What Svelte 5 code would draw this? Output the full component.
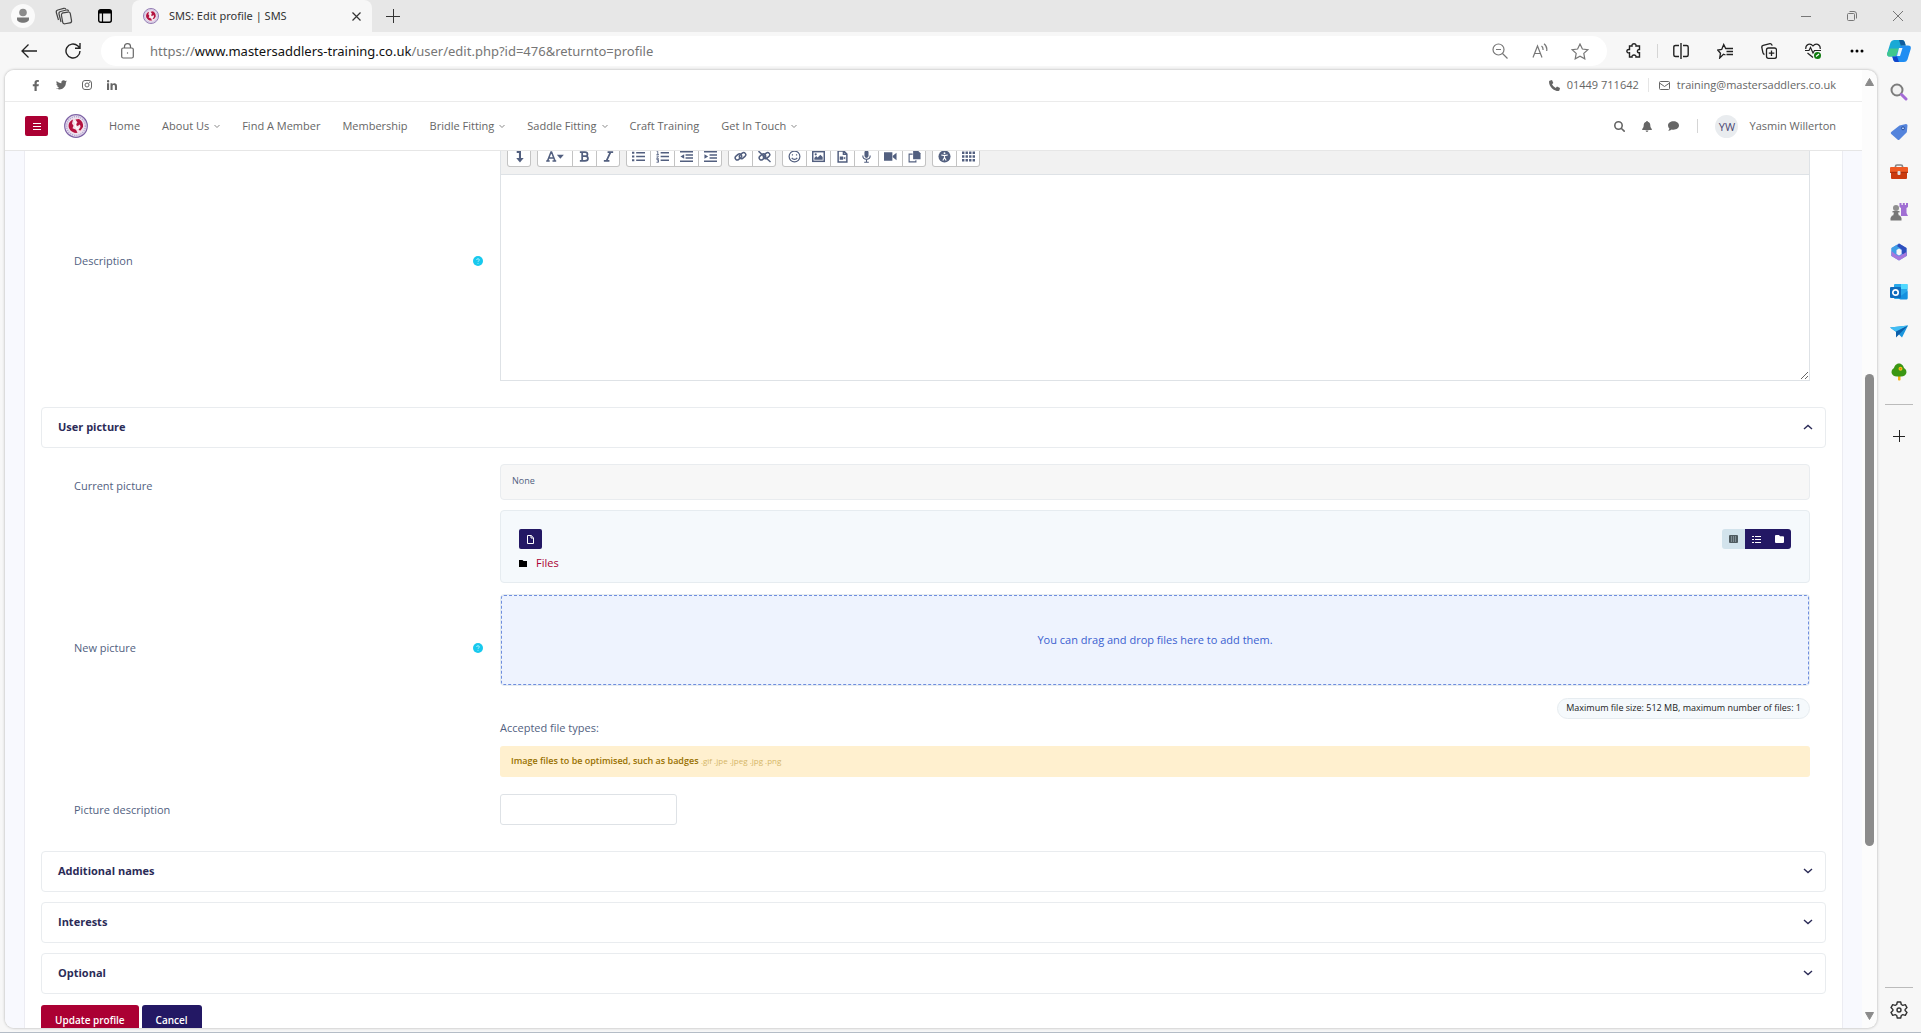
<script lang="ts">
    type Item = { label: string; menu?: boolean };

    const navItems: Item[] = [
        { label: "Home" },
        { label: "About Us", menu: true },
        { label: "Find A Member" },
        { label: "Membership" },
        { label: "Bridle Fitting", menu: true },
        { label: "Saddle Fitting", menu: true },
        { label: "Craft Training" },
        { label: "Get In Touch", menu: true },
    ];

    const editorGroups = [
        ["toggle"],
        ["style", "bold", "italic"],
        ["ul", "ol", "outdent", "indent"],
        ["link", "unlink"],
        ["smile", "image", "media", "mic", "video", "copy"],
        ["access", "grid"],
    ];

    const closedSections = ["Additional names", "Interests", "Optional"];
    const apps = ["search", "tag", "toolbox", "games", "m365", "outlook", "drop", "tree"];

    let description = $state("");
    let pictureDescription = $state("");
</script>

{#snippet crest(size: number)}
    <svg width={size} height={size} viewBox="0 0 24 24">
        <circle cx="12" cy="12" r="11.300" fill="#e9e1f0" stroke="#7d62a5" stroke-width="1.200" />
        <circle cx="12" cy="12" r="9.400" fill="none" stroke="#b9a8cf" stroke-width="1.500" stroke-dasharray="1.200 1" />
        <circle cx="12" cy="12" r="7.800" fill="#f3dfe8" />
        <path d="M9 5.500c-4 1.500-5.500 6-3.500 9.500 1.500 2.800 5 4.300 8 3.800l-1.500-3-3.500-1.500 1-2.500L8 9.500z" fill="#b3123f" />
        <path d="M11.500 5.500 15 5c3 1.500 4.500 4.500 4 8l-2.500 3.500-2-.5 2-3-.5-2.500-2.500 1.500-2-1.500 2-2z" fill="#b3123f" />
        <path d="m10.500 7 1.500 3-1 2 2 2.500 2-.5" fill="none" stroke="#fff" stroke-width="1.100" />
    </svg>
{/snippet}

{#snippet chevron(up: boolean)}
    <svg class="chevron" class:up width="10" height="10" viewBox="0 0 10 10" fill="none" stroke="currentColor" stroke-width="1.400"><path d="M1 3 5 6.500 9 3" /></svg>
{/snippet}

{#snippet help()}
    <svg width="10" height="10" viewBox="0 0 10 10">
        <circle cx="5" cy="5" r="5" fill="#17c9ee" />
        <path d="M3.600 4c0-1.700 2.800-1.700 2.800 0 0 .9-1.400.8-1.400 1.800M5 6.900v.9" fill="none" stroke="#b5effb" stroke-width=".9" />
    </svg>
{/snippet}

{#snippet editorIcon(name: string)}
    <svg width={name === "style" ? 20 : 13} height="13" viewBox={name === "style" ? "0 0 20 14" : "0 0 14 14"} fill="none" stroke="currentColor" stroke-width="1.600">
        {#if name === "toggle"}
            <path d="M4 2h3.500v8" stroke-width="2.200" /><path d="M3.500 8.500h8L7.500 13.500z" fill="currentColor" stroke="none" />
        {:else if name === "style"}
            <path d="M2 11.700 5.700 2.200h.6l3.700 9.500M3.500 8.500h5M.5 11.800h3.800M7.300 11.800h4" /><path d="M12 5h7.500l-3.700 4.500z" fill="currentColor" stroke="none" />
        {:else if name === "bold"}
            <path d="M2 2.200h5.500c3.600 0 3.600 4.500 0 4.500H5M7.500 6.700c4.300 0 4.300 5.100 0 5.100H2M4.500 2.200v9.600" stroke-width="1.900" />
        {:else if name === "italic"}
            <path d="M6 2.200h6M2 11.800h6M9.200 2.200 4.800 11.800" stroke-width="1.900" />
        {:else if name === "ul"}
            <path d="M4.500 3H14M4.500 7H14M4.500 11H14" /><path d="M0 3h2.500M0 7h2.500M0 11h2.500" stroke-width="2.300" />
        {:else if name === "ol"}
            <path d="M5 3h9M5 7h9M5 11h9" /><path d="M.7 1.500h1.200v3.200M.5 4.800h2.700M.5 6.500h2.200L.6 9h2.500M.5 10.200h2.200v3H.5M1 11.700h1.700" stroke-width=".9" />
        {:else if name === "outdent"}
            <path d="M0 2h14M6 5.300h8M6 8.700h8M0 12h14" /><path d="M4.500 4.500v5L.5 7z" fill="currentColor" stroke="none" />
        {:else if name === "indent"}
            <path d="M0 2h14M6 5.300h8M6 8.700h8M0 12h14" /><path d="M.5 4.500v5l4-2.500z" fill="currentColor" stroke="none" />
        {:else if name === "link" || name === "unlink"}
            <rect x="1" y="5.200" width="7.500" height="4.600" rx="2.300" transform="rotate(-40 4.700 7.500)" /><rect x="5.500" y="3.800" width="7.500" height="4.600" rx="2.300" transform="rotate(-40 9.200 6.100)" />
            {#if name === "unlink"}<path d="M.5 1.200 13.500 13" />{/if}
        {:else if name === "smile"}
            <circle cx="7" cy="7" r="5.800" stroke-width="1.300" /><path d="M4 8.500c1.500 2.200 4.500 2.200 6 0M4.800 4.500v1.500M9.200 4.500v1.500" stroke-width="1.300" />
        {:else if name === "image"}
            <rect x=".8" y="1.800" width="12.400" height="10.400" /><path d="M2.500 10.500V8.500l2-2 1.500 1.500 3-3 2.500 2.500v3z" fill="currentColor" stroke="none" /><circle cx="4" cy="4.700" r="1.200" fill="currentColor" stroke="none" />
        {:else if name === "media"}
            <path d="M2.300 1h6l3.400 3.400V13H2.300zM8 1v3.700h3.700" /><path d="M4 7h3.700v3.500H4zM7.700 8.700l2.300-1.500v3z" fill="currentColor" stroke="none" />
        {:else if name === "mic"}
            <rect x="4.800" y=".5" width="4.400" height="8" rx="2.200" fill="currentColor" stroke="none" /><path d="M3 6c0 5.500 8 5.500 8 0M7 10v3M4.500 13.200h5" stroke-width="1.200" />
        {:else if name === "video"}
            <path d="M0 2.500h9v9H0zM9.500 6.300 13.500 3v8L9.500 7.700z" fill="currentColor" stroke="none" />
        {:else if name === "copy"}
            <path d="M5.500.5h5l3 3V10h-8z" fill="currentColor" stroke="none" /><path d="M5 4.500H1.200v8.300h7.300V11" stroke-width="1.200" />
        {:else if name === "access"}
            <circle cx="7" cy="7" r="6.500" fill="currentColor" stroke="none" /><path d="M3.500 5.300 7 6l3.500-.7M7 6v2.500M7 8l-1.800 3.200M7 8l1.800 3.200" stroke="#fff" stroke-width="1.200" /><circle cx="7" cy="3.500" r="1" fill="#fff" stroke="none" />
        {:else}
            <path d="M0 3h14M0 7h14M0 11h14" stroke-width="2.800" stroke-dasharray="2.600 1.200" />
        {/if}
    </svg>
{/snippet}

{#snippet appIcon(name: string)}
    <svg width="18" height="18" viewBox="0 0 18 18">
        {#if name === "search"}
            <circle cx="7" cy="7" r="5.500" fill="#f2f2f2" stroke="#7c7c7c" stroke-width="2" /><path d="m11.500 11.500 4.500 4.500" stroke="#a46bd6" stroke-width="3" stroke-linecap="round" />
        {:else if name === "tag"}
            <path d="M9.500 2.500 16 1q1.500 0 1.500 1.500l-.7 6.700-7.300 7.300q-1 1-2 0L1.200 11q-1-1 0-2z" fill="#5484dc" /><circle cx="13" cy="5.300" r="1.500" fill="#a9c7ff" stroke="#28509c" />
        {:else if name === "toolbox"}
            <path d="M5.500 5V3.500q0-1.500 1.500-1.500h4q1.500 0 1.500 1.500V5" fill="none" stroke="#858585" stroke-width="1.700" /><rect y="4" width="18" height="6" rx="1" fill="#ef5a24" /><rect x="1" y="9" width="16" height="7" rx="1" fill="#cb3b0f" /><path d="M0 9.300h18" stroke="#a52e0c" /><rect x="7.500" y="8" width="3" height="4" rx="1" fill="#dfe3e5" />
        {:else if name === "games"}
            <path d="M9.500 0h2v2h1.300V0h2v2H16V0h2v4l-1.500 1v5l1.500 3h-7V5L9.500 4z" fill="#a06fd3" /><circle cx="6" cy="5" r="3" fill="#8f8f8f" /><path d="M2.500 8h7v1.500H8L9 13H3l1-3.500H2.500zM2 12.500h8L11.500 15v2.500H.5V15z" fill="#777" />
        {:else if name === "m365"}
            <path d="M9 .5 16.500 5v8L9 17.500 1.500 13V5z" fill="#5b8de8" />
            <path d="M1.500 5 7 1.700 12 4.500 6.300 8v5L1.500 13z" fill="#3f9fe6" />
            <path d="m9 .5 7.500 4.500v8l-4.700-2.500V6.500L7 3z" fill="#2e4fbd" />
            <path d="M1.500 13V8l4.800 4L9 13.500l7.500-4.500v4L9 17.500z" fill="#a777dc" />
            <path d="m6.500 7 2.500-1.500L11.500 7v4L9 12.500 6.500 11z" fill="#f7f7f7" />
        {:else if name === "outlook"}
            <rect x="4" y="1" width="13.500" height="15" rx="1" fill="#28a8ea" /><path d="M11 1h6.500v5H11z" fill="#50d9ff" /><path d="m17.500 8-9 6.500q.5 2 2 2h6q1 0 1-1z" fill="#1490df" /><rect y="4" width="11" height="11" rx="1" fill="#0f6cbd" /><circle cx="5.500" cy="9.500" r="2.700" fill="none" stroke="#fff" stroke-width="1.700" />
        {:else if name === "drop"}
            <path d="M0 4.500 18 2.500 12 14.500 7 9.500z" fill="#1b96dd" /><path d="M18 2.500 7 9.500 0 4.500z" fill="#42bdf3" /><path d="M18 2.500 6 8.500v6l3-3z" fill="#0c5ea8" />
        {:else}
            <path d="M8 12h2.500v5q-1.200 1-2.500 0z" fill="#f4b41a" /><path d="M9 .5c3 0 4.500 2.500 5 4.500 2.500 1.500 3 4 2 6-1.500 2.500-4 2.500-7 2.500s-5.500 0-7-2.500c-1-2-.5-4.500 2-6 .5-2 2-4.500 5-4.500z" fill="#3b9714" /><circle cx="10.500" cy="5.700" r="2" fill="#f5c21b" /><circle cx="10.500" cy="5.700" r=".8" fill="#e2661a" />
        {/if}
    </svg>
{/snippet}

<div class="browser">
    <header class="tabstrip">
        <div class="tab-tools">
            <button aria-label="Profile">
                <svg width="24" height="24" viewBox="0 0 24 24"><circle cx="12" cy="12" r="12" fill="#fafafa" /><circle cx="12" cy="8.500" r="3.800" fill="#8b8b8b" /><path d="M6 13.500h12v1.500c0 5-12 5-12 0z" fill="#777" /></svg>
            </button>
            <button aria-label="Workspaces">
                <svg width="18" height="18" viewBox="0 0 18 18" fill="none" stroke="#444" stroke-width="1.200"><rect x="7" y="5.500" width="9" height="11" rx="2" transform="rotate(-10 11 11)" /><path d="M6 15 4 7q-.4-2 1.500-2.500L11.500 3q1.800-.3 2.200 1.300M3.500 13 1.300 5.500q-.4-2 1.500-2.500l6-1.700q1.500-.2 2 1" /></svg>
            </button>
            <button aria-label="Tab actions">
                <svg width="14" height="14" viewBox="0 0 14 14"><rect x=".7" y=".7" width="12.600" height="12.600" rx="2" fill="none" stroke="#000" stroke-width="1.400" /><path d="M1 1h12v3.500H1z" /><path d="M4.500 4v9" stroke="#000" stroke-width="1.200" /></svg>
            </button>
        </div>
        <div class="tab">
            {@render crest(16)}
            <span>SMS: Edit profile | SMS</span>
            <button aria-label="Close tab"><svg width="9" height="9" viewBox="0 0 9 9" stroke="#333" stroke-width="1.200"><path d="m.5.5 8 8M8.500.5l-8 8" /></svg></button>
        </div>
        <button class="new-tab" aria-label="New tab"><svg width="14" height="14" viewBox="0 0 14 14" stroke="#333"><path d="M7.500 0v14M0 7.500h14" /></svg></button>
        <div class="window-buttons">
            <button aria-label="Minimize"><svg width="10" height="10" viewBox="0 0 10 10" stroke="#777"><path d="M0 5.500h10" /></svg></button>
            <button aria-label="Restore"><svg width="10" height="10" viewBox="0 0 10 10" fill="none" stroke="#777"><rect x=".5" y="2.500" width="7" height="7" rx="1" /><path d="M2.500.5H7q2.500 0 2.500 2.500v4.500" /></svg></button>
            <button aria-label="Close"><svg width="10" height="10" viewBox="0 0 10 10" stroke="#777"><path d="m0 0 10 10M10 0 0 10" /></svg></button>
        </div>
    </header>

    <div class="toolbar">
        <button aria-label="Back"><svg width="16" height="14" viewBox="0 0 16 14" fill="none" stroke="#222" stroke-width="1.300"><path d="M16 7H1M7.500.5 1 7l6.500 6.500" /></svg></button>
        <button aria-label="Reload"><svg width="16" height="16" viewBox="0 0 16 16" fill="none" stroke="#222" stroke-width="1.400"><path d="M15 8A7 7 0 1 1 12.700 2.800L15 5M15 0v5.200H10" /></svg></button>
        <div class="address">
            <svg width="13" height="16" viewBox="0 0 13 16" fill="none" stroke="#666" stroke-width="1.200"><rect x=".7" y="5" width="11.600" height="10" rx="1.500" /><path d="M3.500 5V3.500q0-2.800 3-2.800t3 2.800V5" /><circle cx="6.500" cy="10" r=".7" fill="#666" stroke="none" /></svg>
            <div class="url">https://<b>www.mastersaddlers-training.co.uk</b>/user/edit.php?id=476&amp;returnto=profile</div>
            <button aria-label="Zoom out"><svg width="16" height="16" viewBox="0 0 16 16" fill="none" stroke="#777" stroke-width="1.200"><circle cx="6.500" cy="6.500" r="5.500" /><path d="m10.500 10.500 5 5M4 6.500h5" /></svg></button>
            <button aria-label="Read aloud"><svg width="16" height="16" viewBox="0 0 16 16" fill="none" stroke="#777" stroke-width="1.200"><path d="M1 14.500 5.500 3 10 14.500M2.500 10.500h6M9.500 3c1.300 1 1.700 2.300 1.500 4M12 .7c2.500 1.800 3.200 4.300 2.700 7.300" /></svg></button>
            <button aria-label="Favourite"><svg width="18" height="17" viewBox="0 0 18 17" fill="none" stroke="#777" stroke-width="1.200"><path d="m9 1 2.400 5 5.400.7-4 3.700 1 5.400L9 13.200l-4.800 2.600 1-5.400-4-3.700L6.600 6z" /></svg></button>
        </div>
        <div class="extensions">
            <button aria-label="Extensions"><svg width="16" height="16" viewBox="0 0 16 16" fill="none" stroke="#222" stroke-width="1.400"><path d="M3.500 3H6c-.6-3 4.600-3 4 0h3.500v3.500c-2.800-.3-2.800 3.600 0 3.300V14H10c.5-2.700-4.500-2.700-4 0H3.500V9.800C0 10.500 0 5.800 3.500 6.500z" /></svg></button>
            <i class="divider"></i>
            <button aria-label="Split screen"><svg width="16" height="16" viewBox="0 0 16 16" fill="none" stroke="#222" stroke-width="1.400"><path d="M6 2.500H2.500Q.8 2.500.8 4v8q0 1.500 1.700 1.500H6M10 2.500h3.500q1.700 0 1.700 1.500v8q0 1.500-1.700 1.500H10M8 0v16" /></svg></button>
            <button aria-label="Favourites"><svg width="16" height="16" viewBox="0 0 16 16" fill="none" stroke="#222" stroke-width="1.300"><path d="m8.500 12-2-.8L2.700 15l.8-4.800L.7 7l4-.6L6.700 1.500l2 4H16M9.500 8.500H16M9.500 11.500H16" /></svg></button>
            <button aria-label="Collections"><svg width="16" height="16" viewBox="0 0 16 16" fill="none" stroke="#222" stroke-width="1.300"><rect x="5.500" y="5" width="10" height="10.300" rx="2" /><path d="M10.500 7.500v5.500M7.800 10.200h5.500M3.500 11.500q-1.300-.3-1.600-1.800L.8 4.500Q.5 2.800 2.200 2.300L9 .7q1.700-.2 2.200 2" /></svg></button>
            <button aria-label="Browser essentials"><svg width="16" height="16" viewBox="0 0 16 16" fill="none" stroke="#222" stroke-width="1.200"><path d="M.8 6C.3 1 5.500-.5 8 3c2.500-3.500 7.700-2 7.200 3M0 7.500h4l1.500-3L8 10l1.500-2.500H16M2.500 10 8 14.500" /><circle cx="12.500" cy="12.500" r="3.500" fill="#107c10" stroke="none" /><path d="m11 13.500 3-2.500" stroke="#fff" /></svg></button>
            <button aria-label="Settings and more"><svg width="14" height="4" viewBox="0 0 14 4"><circle cx="2" cy="2" r="1.500" /><circle cx="7" cy="2" r="1.500" /><circle cx="12" cy="2" r="1.500" /></svg></button>
        </div>
        <button class="copilot" aria-label="Copilot">
            <svg width="24" height="22" viewBox="0 0 24 22"><path d="M7 0h8q2 0 2.700 2l1 3.500h-3q-2 0-2.700 2L10 14q-.8 2.500-3 2.500H3q-3.500 0-2.700-3.500L3.500 2.500Q4.500 0 7 0z" fill="#19a9d5" /><path d="M3 8.500h9L10 14q-.8 2.500-3 2.500H3q-3.500 0-2.700-3.500z" fill="#40c78d" /><path d="M17 22H9q-2 0-2.700-2l-1-3.500h2q2 0 2.700-2.500l2.500-6.500q.7-2 2.700-2H21q3.500 0 2.700 3.500L20.500 19.500Q19.500 22 17 22z" fill="#1f8df2" /><path d="M12 0h3q2 0 2.700 2l1 3.500h-5z" fill="#105b9c" /><path d="M5.300 16.500H10L12 22H9q-2 0-2.700-2z" fill="#1244c9" /><path d="m12 8-2 8h3l2.500-8z" fill="#e9f6fb" /></svg>
        </button>
    </div>

    <div class="body">
        <div class="page">
            <div class="site">
                <div class="topbar">
                    <div class="social">
                        <a href="#facebook" aria-label="Facebook"><svg width="10" height="11" viewBox="0 0 10 11"><path d="M3.500 11V6.200H1.800V4.300h1.700V2.800C3.500 1 4.500 0 6.200 0L8 .2v1.600H7q-1.300 0-1.300 1.100v1.400h2.200l-.4 1.900H5.700V11z" fill="#666" /></svg></a>
                        <a href="#twitter" aria-label="Twitter"><svg width="11" height="10" viewBox="0 0 11 10"><path d="m11 1.300-1.100 1.300C10 7 6.500 9.500 3.500 9.500 2 9.500 1 9.200 0 8.600c1.200.1 2.300-.2 3.200-.9-1-.1-1.700-.7-2-1.600h1C1 5.700.4 4.900.4 3.800l1 .3C.3 3.200.2 2 .8.900 2 2.200 3.600 3 5.400 3.200 5 1.500 6.200.3 7.600.3c.7 0 1.200.2 1.700.7L10.700.5 9.800 1.700z" fill="#666" /></svg></a>
                        <a href="#instagram" aria-label="Instagram"><svg width="10" height="10" viewBox="0 0 10 10" fill="none" stroke="#666"><rect x=".5" y=".5" width="9" height="9" rx="2.500" /><circle cx="5" cy="5" r="2" /><circle cx="7.600" cy="2.400" r=".3" /></svg></a>
                        <a href="#linkedin" aria-label="LinkedIn"><svg width="10" height="10" viewBox="0 0 10 10" fill="#666"><path d="M0 3.300h2.100V10H0zM3.500 3.300h2v1c1-1.700 4.500-1.700 4.500 1.700v4H7.900V6.500c0-2-2.300-1.900-2.300 0V10H3.500z" /><circle cx="1.100" cy="1.200" r="1.200" /></svg></a>
                    </div>
                    <div class="contact">
                        <a href="#phone"><svg width="11" height="11" viewBox="0 0 11 11"><path d="M.5.7 3 0l1.300 3L3 4.200q1 2.500 3.700 3.700L8 6.600l3 1.300-.6 2.500-.8.600C4.500 11 0 6.500 0 1.400z" fill="#666" /></svg>01449 711642</a>
                        <a href="#mail"><svg width="11" height="9" viewBox="0 0 11 9" fill="none" stroke="#666"><rect x=".5" y=".5" width="10" height="8" rx="1" /><path d="m.5 2 5 3.500 5-3.500" /></svg>training@mastersaddlers.co.uk</a>
                    </div>
                </div>

                <nav class="navbar">
                    <button class="burger" aria-label="Menu"><svg width="8" height="8" viewBox="0 0 8 8" stroke="#fff"><path d="M0 1.500h8M0 4.500h8M0 7.500h8" /></svg></button>
                    <a class="logo" href="#home" aria-label="SMS">{@render crest(24)}</a>
                    <div class="links">
                        {#each navItems as item}
                            <a href="#nav">{item.label}{#if item.menu}<svg width="6" height="5" viewBox="0 0 6 5" fill="none" stroke="#888"><path d="m.5 1 2.500 2.500L5.500 1" /></svg>{/if}</a>
                        {/each}
                    </div>
                    <div class="user-tools">
                        <button aria-label="Search"><svg width="11" height="11" viewBox="0 0 11 11" fill="none" stroke="#666" stroke-width="1.600"><circle cx="4.500" cy="4.500" r="3.700" /><path d="m7.200 7.200 3.500 3.500" /></svg></button>
                        <button aria-label="Notifications"><svg width="10" height="11" viewBox="0 0 10 11" fill="#666"><path d="M4.300 0h1.400v.8C7.500 1.200 8.300 2.500 8.300 4.300c0 2 .7 2.900 1.500 3.700v1H.2V8c.8-.8 1.500-1.700 1.500-3.700 0-1.800.8-3.100 2.600-3.500zM3.600 9.600h2.800c0 1.800-2.800 1.800-2.800 0z" /></svg></button>
                        <button aria-label="Messages"><svg width="11" height="10" viewBox="0 0 11 10"><path d="M5.500.3C8.600.3 11 2.200 11 4.500S8.600 8.700 5.500 8.700q-1 0-1.800-.2Q2 9.800.2 9.800q1.100-1.200 1.200-2.300Q0 6.300 0 4.500C0 2.200 2.400.3 5.500.3z" fill="#666" /></svg></button>
                        <i class="divider"></i>
                        <span class="initials">YW</span>
                        <a href="#user">Yasmin Willerton</a>
                    </div>
                </nav>

                <main>
                    <form class="card" onsubmit={(e) => e.preventDefault()}>
                        <div class="row editor-row">
                            <div class="label"><label for="description">Description</label>{@render help()}</div>
                            <div class="editor">
                                <div class="editor-toolbar">
                                    {#each editorGroups as group}
                                        <div class="group">
                                            {#each group as name}
                                                <button type="button" class:wide={name === "style"} aria-label={name}>{@render editorIcon(name)}</button>
                                            {/each}
                                        </div>
                                    {/each}
                                </div>
                                <textarea id="description" bind:value={description}></textarea>
                            </div>
                        </div>

                        <button type="button" class="section">User picture {@render chevron(true)}</button>

                        <div class="section-body">
                            <div class="row low-label">
                                <div class="label"><span>Current picture</span></div>
                                <div class="static">None</div>
                            </div>

                            <div class="row low-label">
                                <div class="label"><span>New picture</span>{@render help()}</div>
                                <div class="upload">
                                    <div class="filemanager">
                                        <div class="fm-bar">
                                            <button type="button" class="add" aria-label="Add"><svg width="7" height="9" viewBox="0 0 7 9" fill="none" stroke="#fff"><path d="M.5.5h3.700l2.300 2.300v5.700h-6zM4 .5V3h2.500" /></svg></button>
                                            <div class="views">
                                                <button type="button" class="current" aria-label="Icons"><svg width="9" height="8" viewBox="0 0 9 8"><rect width="9" height="8" rx="1" fill="#4f5b60" /><path d="M2.500 1v6M4.500 1v6M6.500 1v6" stroke="#7f8d94" /></svg></button>
                                                <button type="button" aria-label="List"><svg width="9" height="7" viewBox="0 0 9 7" stroke="#fff"><path d="M0 .5h2M3 .5h6M0 3.500h2M3 3.500h6M0 6.500h2M3 6.500h6" /></svg></button>
                                                <button type="button" aria-label="Tree"><svg width="9" height="8" viewBox="0 0 9 8"><path d="M1 0h3l1 1.200h3q1 0 1 1V7q0 1-1 1H1Q0 8 0 7V1q0-1 1-1z" fill="#fff" /></svg></button>
                                            </div>
                                        </div>
                                        <div class="path">
                                            <svg width="8" height="7" viewBox="0 0 8 7"><path d="M0 0h3.500l1 1H8v6H0z" /></svg>
                                            <a href="#files">Files</a>
                                        </div>
                                    </div>
                                    <div class="dropzone">You can drag and drop files here to add them.</div>
                                    <span class="limits">Maximum file size: 512 MB, maximum number of files: 1</span>
                                    <p>Accepted file types:</p>
                                    <div class="accepted">Image files to be optimised, such as badges <small>.gif .jpe .jpeg .jpg .png</small></div>
                                </div>
                            </div>

                            <div class="row description-row">
                                <div class="label"><label for="picture-description">Picture description</label></div>
                                <input id="picture-description" type="text" bind:value={pictureDescription} />
                            </div>
                        </div>

                        {#each closedSections as title}
                            <button type="button" class="section">{title} {@render chevron(false)}</button>
                        {/each}

                        <div class="actions">
                            <button class="primary">Update profile</button>
                            <button type="button">Cancel</button>
                        </div>
                    </form>
                </main>
            </div>

            <div class="scrollbar">
                <svg width="9" height="8" viewBox="0 0 9 8"><path d="M4.500.5 8.500 7.500H.5z" fill="#8b8b8b" stroke="#8b8b8b" stroke-linejoin="round" /></svg>
                <div class="track"><div class="thumb"></div></div>
                <svg width="9" height="8" viewBox="0 0 9 8"><path d="M4.500 7.500.5.5h8z" fill="#8b8b8b" stroke="#8b8b8b" stroke-linejoin="round" /></svg>
            </div>
        </div>

        <aside>
            {#each apps as app}
                <button aria-label={app}>{@render appIcon(app)}</button>
            {/each}
            <hr />
            <button aria-label="Customize"><svg width="12" height="12" viewBox="0 0 12 12" stroke="#222"><path d="M6.500 0v12M0 6.500h12" /></svg></button>
            <hr class="bottom" />
            <button aria-label="Settings"><svg width="18" height="18" viewBox="0 0 18 18" fill="none" stroke="#333" stroke-width="1.400" stroke-linejoin="round"><path d="M7.300 1h3.400l.6 2.500 1.500.9 2.500-.7L17 6.600l-1.900 1.800v1.200l1.900 1.800-1.700 2.900-2.500-.7-1.500.9-.6 2.500H7.300l-.6-2.500-1.500-.9-2.500.7L1 11.400l1.900-1.800V8.400L1 6.600l1.700-2.900 2.500.7 1.500-.9z" /><circle cx="9" cy="9" r="2" /></svg></button>
        </aside>
    </div>
</div>

<style>
    :global(body) {
        margin: 0;
    }
    .browser,
    .browser * {
        box-sizing: border-box;
    }
    .browser {
        display: flex;
        flex-direction: column;
        height: 100vh;
        overflow: hidden;
        background: #f7f7f7;
        border-bottom: 1px solid #b4bcc6;
        font-family: "Open Sans", "Noto Sans", sans-serif;
        font-size: 11px;
        line-height: 18px;
        color: #525f7f;
    }
    svg {
        display: block;
        flex: none;
    }
    a {
        color: inherit;
        text-decoration: none;
    }
    button {
        display: flex;
        align-items: center;
        justify-content: center;
        padding: 0;
        border: 0;
        background: none;
        color: inherit;
        font: inherit;
    }

    /* Browser chrome */
    .tabstrip {
        display: flex;
        flex: none;
        height: 32px;
        background: #e7e7e7;
    }
    .tab-tools {
        display: flex;
        align-items: center;
        width: 132px;
        padding-left: 2px;
    }
    .tab-tools button {
        width: 41px;
    }
    .tab {
        display: flex;
        align-items: center;
        gap: 10px;
        width: 240px;
        padding: 0 8px 0 11px;
        border-radius: 8px 8px 0 0;
        background: #f7f7f7;
        color: #333;
        font-family: "Noto Sans", sans-serif;
    }
    .tab span {
        flex: 1;
        white-space: nowrap;
    }
    .tab button {
        width: 16px;
        height: 16px;
    }
    .new-tab {
        width: 42px;
    }
    .window-buttons {
        display: flex;
        margin-left: auto;
    }
    .window-buttons button {
        width: 46px;
    }
    .toolbar {
        display: flex;
        align-items: center;
        flex: none;
        height: 38px;
        padding-left: 7px;
    }
    .toolbar > button {
        width: 44px;
    }
    .toolbar .copilot {
        width: 40px;
        margin-right: 2px;
    }
    .address {
        display: flex;
        align-items: center;
        flex: 1;
        height: 30px;
        margin: 0 5px 0 6px;
        padding: 0 7px 0 20px;
        border-radius: 15px;
        background: #fff;
    }
    .address button {
        width: 40px;
    }
    .url {
        flex: 1;
        padding-left: 16px;
        font-family: "Noto Sans", sans-serif;
        font-size: 13px;
        color: #767676;
    }
    .url b {
        font-weight: 400;
        color: #111;
    }
    .extensions {
        display: flex;
        align-items: center;
    }
    .extensions button {
        width: 44px;
    }
    .divider {
        width: 1px;
        height: 14px;
        margin: 0 1px;
        background: #d5d5d5;
    }
    .body {
        display: flex;
        flex: 1;
        min-height: 0;
    }
    aside {
        display: flex;
        flex-direction: column;
        align-items: center;
        width: 44px;
        padding-top: 2px;
    }
    aside button {
        height: 40px;
    }
    aside hr {
        width: 28px;
        margin: 12px 0 11px;
        border: 0;
        border-top: 1px solid #bbb;
    }
    aside .bottom {
        margin: auto 0 2px;
    }
    aside button:last-child {
        margin-bottom: 2px;
    }

    /* Web page */
    .page {
        display: flex;
        flex: 1;
        min-width: 0;
        margin: 0 0 4px 5px;
        overflow: hidden;
        border-radius: 9px;
        background: #fcfcfc;
        box-shadow: 0 0 3px rgba(0, 0, 0, 0.3);
    }
    .site {
        display: flex;
        flex-direction: column;
        flex: 1;
        min-width: 0;
        color: #666;
    }
    .scrollbar {
        display: flex;
        flex-direction: column;
        align-items: center;
        width: 15px;
        padding: 8px 0;
    }
    .track {
        flex: 1;
        padding-top: 288px;
    }
    .thumb {
        width: 9px;
        height: 74%;
        border-radius: 5px;
        background: #8b8b8b;
    }
    .topbar {
        display: flex;
        align-items: center;
        justify-content: space-between;
        flex: none;
        height: 32px;
        padding: 0 26px 1px;
        border-bottom: 1px solid #ebebeb;
        background: #fff;
    }
    .social {
        display: flex;
        align-items: center;
        gap: 15px;
    }
    .contact {
        display: flex;
        line-height: 14px;
    }
    .contact a {
        display: flex;
        align-items: center;
        gap: 7px;
    }
    .contact a + a {
        margin-left: 9px;
        padding-left: 10px;
        border-left: 1px solid #e5e5e5;
    }
    .navbar {
        display: flex;
        align-items: center;
        flex: none;
        height: 49px;
        padding: 0 26px 0 20px;
        border-bottom: 1px solid #e6e6e6;
        background: #fff;
        font-weight: 500;
    }
    .burger {
        width: 23px;
        height: 20px;
        border-radius: 2px;
        background: #ab0033;
    }
    .logo {
        margin: 0 21px 0 16px;
    }
    .links {
        display: flex;
        gap: 22px;
    }
    .links a {
        display: flex;
        align-items: center;
        gap: 5px;
    }
    .user-tools {
        display: flex;
        align-items: center;
        margin-left: auto;
    }
    .user-tools button {
        width: 27px;
    }
    .user-tools .divider {
        margin: 0 17px 0 10px;
    }
    .initials {
        width: 23px;
        height: 23px;
        margin-right: 11px;
        border-radius: 50%;
        background: #e9ecef;
        color: #4a4672;
        line-height: 23px;
        text-align: center;
    }
    main {
        flex: 1;
        min-height: 0;
        overflow: hidden;
        padding: 0 19px;
        background: #f8f9fe;
    }
    .card {
        padding: 0 16px;
        border: solid #ececf2;
        border-width: 0 1px;
        background: #fff;
        color: #525f7f;
    }
    .row {
        display: flex;
        align-items: center;
        padding: 0 16px 0 33px;
    }
    .label {
        display: flex;
        align-items: center;
        justify-content: space-between;
        flex: none;
        width: 426px;
        padding-right: 17px;
    }
    .low-label .label {
        padding-top: 8px;
    }
    .editor {
        flex: 1;
        border: 1px solid #dee2e6;
    }
    .editor-row {
        margin: -11px 0 26px; /* the form is scrolled under the nav bar */
    }
    .editor-toolbar {
        display: flex;
        gap: 6px;
        height: 34px;
        padding: 2px 6px 7px;
        border-bottom: 1px solid #dee2e6;
        background: #f1f1f1;
    }
    .group {
        display: flex;
        border-radius: 3px;
        background: #fff;
        box-shadow: inset 0 0 0 1px #c3c3c3;
    }
    .group button {
        width: 24px;
        padding-top: 3px;
    }
    .group .wide {
        width: 35px;
    }
    .group button + button {
        border-left: 1px solid #c3c3c3;
    }
    textarea {
        display: block;
        width: 100%;
        height: 205px;
        border: 0;
        outline: 0;
        resize: vertical;
        font: inherit;
    }
    .section {
        justify-content: space-between;
        width: 100%;
        height: 41px;
        margin-bottom: 10px;
        padding: 0 12px 2px 16px;
        border: 1px solid #e9ecef;
        border-radius: 4px;
        color: #2b2b57;
        font-size: 11px;
        font-weight: 700;
    }
    .up {
        transform: scaleY(-1);
    }
    .section-body {
        display: flex;
        flex-direction: column;
        gap: 10px;
        padding: 6px 0 26px;
    }
    .static {
        flex: 1;
        height: 36px;
        padding: 7px 11px;
        border: 1px solid #e9ecef;
        border-radius: 4px;
        background: #f7f7f7;
        font-size: 9px;
    }
    .upload {
        display: flex;
        flex-direction: column;
        flex: 1;
    }
    .filemanager {
        height: 73px;
        padding: 18px;
        border: 1px solid #e6ecf0;
        border-radius: 4px;
        background: #f5f9fc;
    }
    .fm-bar {
        display: flex;
        justify-content: space-between;
    }
    .add,
    .views button {
        width: 23px;
        height: 20px;
        background: #231864;
    }
    .add {
        border-radius: 2px;
    }
    .views {
        display: flex;
        overflow: hidden;
        border-radius: 3px;
    }
    .views .current {
        background: #d2e3ec;
    }
    .path {
        display: flex;
        align-items: center;
        gap: 9px;
        padding-top: 5px;
        color: #ab0033;
    }
    .dropzone {
        display: flex;
        align-items: center;
        justify-content: center;
        height: 92px;
        margin: 11px 0 12px;
        border: 1px solid #e6ecf0;
        border-radius: 4px;
        outline: 1px dashed #6f8ede;
        outline-offset: -2px;
        background: #eef3fe;
        color: #3a5fd0;
    }
    .limits {
        align-self: flex-end;
        height: 21px;
        padding: 0 8px;
        border: 1px solid #e6ecf0;
        border-radius: 11px;
        background: #f5f9fc;
        color: #222;
        font-size: 9px;
        font-weight: 500;
    }
    p {
        margin: 0 0 9px;
    }
    .accepted {
        height: 31px;
        padding: 6px 11px;
        border-radius: 3px;
        background: #fff0cf;
        color: #987000;
        font-size: 9px;
        font-weight: 600;
    }
    small {
        color: #d5b667;
        font-size: 8px;
        font-weight: 400;
    }
    .description-row {
        margin-top: 7px;
    }
    input {
        width: 177px;
        height: 31px;
        border: 1px solid #dee2e6;
        border-radius: 3px;
        background: #fff;
        font: inherit;
    }
    .actions {
        display: flex;
        gap: 3px;
        padding-top: 1px;
    }
    .actions button {
        height: 29px;
        padding: 0 14px;
        border-radius: 3px;
        background: #231864;
        color: #fff;
        font-size: 10px;
        font-weight: 600;
    }
    .actions .primary {
        background: #ab0033;
    }
</style>
